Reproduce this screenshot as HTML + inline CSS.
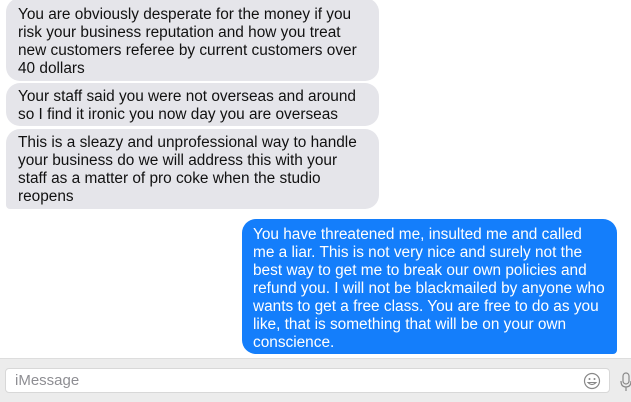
<!DOCTYPE html>
<html><head><style>
body{margin:0;width:631px;height:401px;background:#fff;position:relative;overflow:hidden;font-family:"Liberation Sans",Helvetica,Arial,sans-serif;font-size:15.4px;line-height:18px;}
.b{position:absolute;background:#e5e5ea;color:#111;border-radius:14px;padding:0 0 0 12px;box-sizing:border-box;white-space:nowrap;}
.u{position:absolute;background:#147efb;color:#fff;border-radius:14px;padding:0 0 0 11px;box-sizing:border-box;white-space:nowrap;}
.bar{position:absolute;left:0;top:358px;width:631px;height:43px;background:#ececec;border-top:1px solid #ddd;}
.in{position:absolute;left:5px;top:368px;width:605px;height:25px;background:#fff;border:1px solid #d8d8d8;border-radius:4px;box-sizing:border-box;color:#8e8e93;font-size:15px;line-height:23px;padding-left:9px;}
</style></head><body>
<div class="b" style="left:6px;top:-2px;width:373px;height:83px;padding-top:8px">You are obviously desperate for the money if you<br>risk your business reputation and how you treat<br>new customers referee by current customers over<br>40 dollars</div>
<div class="b" style="left:6px;top:83px;width:373px;height:43px;padding-top:5px">Your staff said you were not overseas and around<br>so I find it ironic you now day you are overseas</div>
<div class="b" style="left:6px;top:129px;width:373px;height:80px;padding-top:5px;border-bottom-left-radius:4px">This is a sleazy and unprofessional way to handle<br>your business do we will address this with your<br>staff as a matter of pro coke when the studio<br>reopens</div>
<div class="u" style="left:242px;top:219px;width:375px;height:135px;padding-top:7px;border-bottom-right-radius:4px">You have threatened me, insulted me and called<br>me a liar. This is not very nice and surely not the<br>best way to get me to break our own policies and<br>refund you. I will not be blackmailed by anyone who<br>wants to get a free class. You are free to do as you<br>like, that is something that will be on your own<br>conscience.</div>
<div class="bar"></div>
<div class="in">iMessage</div>
<svg style="position:absolute;left:583px;top:372px" width="18" height="18" viewBox="0 0 18 18"><circle cx="9" cy="9" r="7.5" fill="none" stroke="#888" stroke-width="1.2"/><circle cx="6.5" cy="7" r="1" fill="#888"/><circle cx="11.5" cy="7" r="1" fill="#888"/><path d="M5 10.5q4 4 8 0z" fill="none" stroke="#888" stroke-width="1.1"/></svg>
<svg style="position:absolute;left:620px;top:372px" width="11" height="20" viewBox="0 0 11 20"><rect x="3" y="1" width="6" height="11" rx="3" fill="none" stroke="#888" stroke-width="1.2"/><path d="M1 9q0 6 5 6q5 0 5-6M6 15v4" fill="none" stroke="#888" stroke-width="1.2"/></svg>
</body></html>
